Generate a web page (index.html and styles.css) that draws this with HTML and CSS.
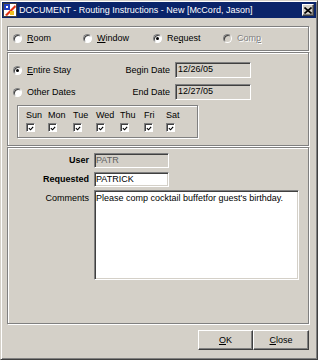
FILE: index.html
```html
<!DOCTYPE html>
<html>
<head>
  <title>DOCUMENT - Routing Instructions</title>
  <link rel="stylesheet" href="styles.css">
</head>
<body>
<div class="window">
  <div class="titlebar">
    <svg class="app-icon" width="14" height="14" viewBox="0 0 14 14">
      <rect x="0.5" y="0.5" width="13" height="13" fill="#ffffff" stroke="#404040"/>
      <rect x="1" y="1" width="6" height="6" fill="#2040c0"/>
      <path d="M2 12 L12 2 L13 4 L4 13 Z" fill="#e03010"/>
      <path d="M7 8 L11 8 L11 12 L7 12 Z" fill="#f0c020"/>
      <path d="M3 3 L5 3 L5 5 L3 5 Z" fill="#ffffff"/>
    </svg>
    <span class="title">DOCUMENT - Routing Instructions - New [McCord, Jason]</span>
    <span class="close-btn">
      <svg width="8" height="7" viewBox="0 0 8 7"><path d="M0.5 0.5 L7.5 6.5 M7.5 0.5 L0.5 6.5" stroke="#000" stroke-width="1.6"/></svg>
    </span>
  </div>

  <div class="content">
    <!-- tryb routingu -->
    <div class="panel type-panel">
      <label class="opt"><span class="radio"></span><span><u>R</u>oom</span></label>
      <label class="opt"><span class="radio"></span><span><u>W</u>indow</span></label>
      <label class="opt"><span class="radio on"></span><span>Re<u>q</u>uest</span></label>
      <label class="opt disabled"><span class="radio"></span><span>Com<u>p</u></span></label>
    </div>

    <!-- daty -->
    <div class="panel dates-panel">
      <div class="date-grid">
        <label class="opt"><span class="radio on"></span><span><u>E</u>ntire Stay</span></label>
        <span class="field-label">Begin Date</span>
        <span class="field date-field">12/26/05</span>
        <label class="opt"><span class="radio"></span><span>Other Dates</span></label>
        <span class="field-label">End Date</span>
        <span class="field date-field">12/27/05</span>
      </div>
      <div class="days">
        <div class="day"><span>Sun</span><span class="check"><svg width="7" height="7" viewBox="0 0 7 7"><path d="M1 3 L3 5 L6 1.5" stroke="#000" stroke-width="1.3" fill="none"/></svg></span></div>
        <div class="day"><span>Mon</span><span class="check"><svg width="7" height="7" viewBox="0 0 7 7"><path d="M1 3 L3 5 L6 1.5" stroke="#000" stroke-width="1.3" fill="none"/></svg></span></div>
        <div class="day"><span>Tue</span><span class="check"><svg width="7" height="7" viewBox="0 0 7 7"><path d="M1 3 L3 5 L6 1.5" stroke="#000" stroke-width="1.3" fill="none"/></svg></span></div>
        <div class="day"><span>Wed</span><span class="check"><svg width="7" height="7" viewBox="0 0 7 7"><path d="M1 3 L3 5 L6 1.5" stroke="#000" stroke-width="1.3" fill="none"/></svg></span></div>
        <div class="day"><span>Thu</span><span class="check"><svg width="7" height="7" viewBox="0 0 7 7"><path d="M1 3 L3 5 L6 1.5" stroke="#000" stroke-width="1.3" fill="none"/></svg></span></div>
        <div class="day"><span>Fri</span><span class="check"><svg width="7" height="7" viewBox="0 0 7 7"><path d="M1 3 L3 5 L6 1.5" stroke="#000" stroke-width="1.3" fill="none"/></svg></span></div>
        <div class="day"><span>Sat</span><span class="check"><svg width="7" height="7" viewBox="0 0 7 7"><path d="M1 3 L3 5 L6 1.5" stroke="#000" stroke-width="1.3" fill="none"/></svg></span></div>
      </div>
    </div>

    <!-- uzytkownik i komentarz -->
    <div class="panel details-panel">
      <div class="row">
        <span class="row-label bold">User</span>
        <span class="field short disabled-field">PATR</span>
      </div>
      <div class="row">
        <span class="row-label bold">Requested</span>
        <span class="field short">PATRICK</span>
      </div>
      <div class="row comments-row">
        <span class="row-label">Comments</span>
        <div class="field comments">Please comp cocktail buffetfor guest's birthday.</div>
      </div>
    </div>

    <div class="buttons">
      <button class="btn ok"><u>O</u>K</button>
      <button class="btn close"><u>C</u>lose</button>
    </div>
  </div>
</div>
</body>
</html>
```

FILE: styles.css
```css
/* Okno w stylu Windows classic */
body {
  margin: 0;
  font-family: "Liberation Sans", Arial, sans-serif;
  font-size: 9px;
  color: #000;
  background: #d4d0c8;
}

.window {
  width: 318px;
  height: 360px;
  box-sizing: border-box;
  border: 1px solid;
  border-color: #d4d0c8 #404040 #404040 #d4d0c8;
  box-shadow: inset 1px 1px #fff, inset -1px -1px #808080;
  padding: 1px;
  background: #d4d0c8;
}

/* Pasek tytulu */
.titlebar {
  height: 16px;
  background: #0a246a;
  color: #fff;
  display: flex;
  align-items: center;
  padding: 0 2px 0 1px;
}

.app-icon {
  flex: none;
  margin-right: 2px;
}

.title {
  white-space: nowrap;
  line-height: 11px;
}

.close-btn {
  margin-left: auto;
  width: 12px;
  height: 12px;
  box-sizing: border-box;
  background: #d4d0c8;
  border: 1px solid;
  border-color: #fff #404040 #404040 #fff;
  box-shadow: inset -1px -1px #808080;
  display: flex;
  align-items: center;
  justify-content: center;
}

.content {
  padding: 8px 7px 0 5px;
}

/* Panele z wytrawiona ramka */
.panel {
  box-sizing: border-box;
  border: 1px solid #808080;
  box-shadow: 1px 1px 0 #fff, inset 1px 1px 0 #fff;
  margin-bottom: 1px;
}

.type-panel {
  height: 25px;
  display: flex;
  align-items: center;
  padding-left: 5px;
}

.opt {
  display: flex;
  align-items: center;
  gap: 5px;
  width: 70px;
  line-height: 11px;
  white-space: nowrap;
}

.opt.disabled {
  color: #808080;
  text-shadow: 1px 1px 0 #fff;
}

.radio {
  flex: none;
  position: relative;
  width: 9px;
  height: 9px;
  box-sizing: border-box;
  border-radius: 50%;
  border: 1px solid;
  border-color: #808080 #fff #fff #808080;
  box-shadow: inset 1px 1px 0 #404040;
  background: #fff;
}

.opt.disabled .radio {
  background: #d4d0c8;
}

.radio.on::after {
  content: "";
  position: absolute;
  left: 2px;
  top: 2px;
  width: 3px;
  height: 3px;
  border-radius: 50%;
  background: #000;
}

/* Daty */
.dates-panel {
  height: 94px;
  padding: 9px 0 0 5px;
}

.date-grid {
  display: grid;
  grid-template-columns: 109px 53px 76px;
  grid-template-rows: 16px 16px;
  row-gap: 6px;
  align-items: center;
}

.field-label {
  text-align: right;
  padding-right: 5px;
  line-height: 11px;
  white-space: nowrap;
}

.field {
  box-sizing: border-box;
  border: 1px solid;
  border-color: #808080 #fff #fff #808080;
  box-shadow: inset 1px 1px 0 #404040, inset -1px -1px 0 #d4d0c8;
  background: #fff;
  padding-left: 1px;
  white-space: nowrap;
  overflow: hidden;
}

.date-field {
  height: 16px;
  background: #d4d0c8;
  padding-left: 2px;
  line-height: 13px;
}

.days {
  box-sizing: border-box;
  width: 181px;
  height: 33px;
  margin: 5px 0 0 4px;
  border: 1px solid #808080;
  box-shadow: 1px 1px 0 #fff, inset 1px 1px 0 #fff;
  padding: 4px 0 0 8px;
  display: grid;
  grid-template-columns: 22px 25px 23px 24px 24px 22px auto;
}

.day {
  display: flex;
  flex-direction: column;
  align-items: flex-start;
  gap: 2px;
  line-height: 11px;
}

.check {
  width: 9px;
  height: 9px;
  box-sizing: border-box;
  border: 1px solid;
  border-color: #808080 #fff #fff #808080;
  box-shadow: inset 1px 1px 0 #404040;
  background: #fff;
  display: flex;
  align-items: center;
  justify-content: center;
}

.check svg {
  margin: 1px 0 0 1px;
}

/* Uzytkownik / komentarze */
.details-panel {
  height: 177px;
  padding-top: 5px;
}

.row {
  display: flex;
  align-items: center;
}

.row + .row {
  margin-top: 4px;
}

.row-label {
  width: 86px;
  flex: none;
  text-align: right;
  padding-right: 5px;
  box-sizing: border-box;
  line-height: 11px;
}

.bold {
  font-weight: bold;
}

.short {
  width: 75px;
  height: 15px;
  line-height: 13px;
}

.disabled-field {
  background: #d4d0c8;
  color: #606060;
}

.comments-row {
  align-items: flex-start;
}

.row.comments-row {
  margin-top: 3px;
}

.comments-row .row-label {
  padding-top: 3px;
}

.comments {
  width: 205px;
  height: 90px;
  line-height: 11px;
  padding-top: 2px;
  padding-left: 1px;
  white-space: normal;
}

/* Przyciski */
.buttons {
  display: flex;
  justify-content: flex-end;
  margin-top: 6px;
}

.btn {
  height: 20px;
  box-sizing: border-box;
  background: #d4d0c8;
  border: 1px solid;
  border-color: #fff #404040 #404040 #fff;
  box-shadow: inset -1px -1px 0 #808080;
  font-family: "Liberation Sans", Arial, sans-serif;
  font-size: 9px;
  color: #000;
  padding: 0;
}

.btn.ok {
  width: 55px;
}

.btn.close {
  width: 56px;
}
```
